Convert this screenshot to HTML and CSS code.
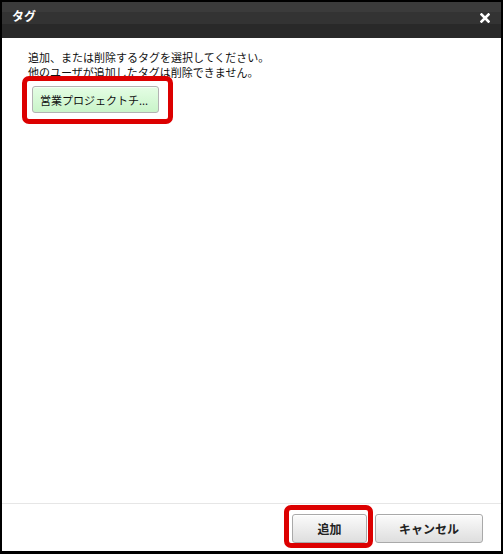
FILE: index.html
```html
<!DOCTYPE html>
<html lang="ja">
<head>
<meta charset="utf-8">
<title>タグ</title>
<link rel="stylesheet" href="styles.css">
</head>
<body>
<div class="dialog">
  <div class="titlebar">
    <span class="title">タグ</span>
    <svg class="close" width="10" height="10" viewBox="0 0 10 10" aria-label="閉じる">
      <path d="M1.5 1.5 L8.5 8.5 M8.5 1.5 L1.5 8.5" stroke="#fff" stroke-width="2.6" stroke-linecap="square"/>
    </svg>
  </div>
  <div class="content">
    <p class="msg">追加、または削除するタグを選択してください。<br>他のユーザが追加したタグは削除できません。</p>
    <div class="tags">
      <span class="tag hl-tag">営業プロジェクトチ...</span>
    </div>
  </div>
  <div class="footer">
    <button class="btn hl-btn">追加</button>
    <button class="btn btn-cancel">キャンセル</button>
  </div>
</div>
</body>
</html>
```
FILE: styles.css
```css
html, body {
  margin: 0;
  padding: 0;
  background: #fff;
}
.dialog {
  width: 503px;
  height: 554px;
  box-sizing: border-box;
  border: 2px solid #000;
  border-bottom-width: 3px;
  display: flex;
  flex-direction: column;
  font-family: "Noto Sans CJK JP", "Liberation Sans", sans-serif;
  color: #111;
  background: #fff;
}
.titlebar {
  height: 36px;
  flex: none;
  box-sizing: border-box;
  display: flex;
  align-items: flex-start;
  justify-content: space-between;
  padding: 6px 11px 0 10px;
  background: linear-gradient(#3b3b3b 0, #3b3b3b 10px, #333 10px, #333 22px, #292929 22px, #292929 100%);
}
.title {
  color: #fff;
  font-size: 12px;
  line-height: 16px;
  font-weight: bold;
}
.close {
  margin-top: 5px;
  display: block;
}
.content {
  flex: 1;
  padding: 12px 0 0 26px;
}
.msg {
  margin: 0;
  font-size: 11px;
  line-height: 15px;
}
.tags {
  margin-top: 6px;
  padding-left: 4px;
  display: flex;
}
.tag {
  position: relative;
  box-sizing: border-box;
  width: 127px;
  height: 27px;
  display: inline-flex;
  align-items: center;
  padding-left: 7px;
  font-size: 11px;
  border: 1px solid #b3b3b3;
  border-radius: 3px;
  background: linear-gradient(#e4fde4, #c9f4c9);
  box-shadow: inset 0 1px 0 #f4fff4;
}
.hl-tag::before {
  content: "";
  position: absolute;
  left: -11px;
  top: -11px;
  right: -15px;
  bottom: -12px;
  border: 5px solid #dc0000;
  border-radius: 7px;
  pointer-events: none;
}
.footer {
  flex: none;
  height: 48px;
  box-sizing: border-box;
  border-top: 1px solid #e6e6e6;
  display: flex;
  justify-content: flex-end;
  align-items: flex-start;
  gap: 8px;
  padding: 10px 18px 0 0;
}
.btn {
  position: relative;
  box-sizing: border-box;
  width: 75px;
  height: 29px;
  margin: 0;
  padding: 0;
  font-family: "Noto Sans CJK JP", "Liberation Sans", sans-serif;
  font-size: 12px;
  font-weight: bold;
  color: #222;
  border: 1px solid #a9a9a9;
  border-radius: 3px;
  background: linear-gradient(#fbfbfb, #dedede);
  box-shadow: inset 0 1px 0 #fff;
}
.btn-cancel {
  width: 108px;
}
.hl-btn::before {
  content: "";
  position: absolute;
  left: -9px;
  top: -10px;
  right: -7px;
  bottom: -6px;
  border: 5px solid #dc0000;
  border-radius: 7px;
  pointer-events: none;
}
```
